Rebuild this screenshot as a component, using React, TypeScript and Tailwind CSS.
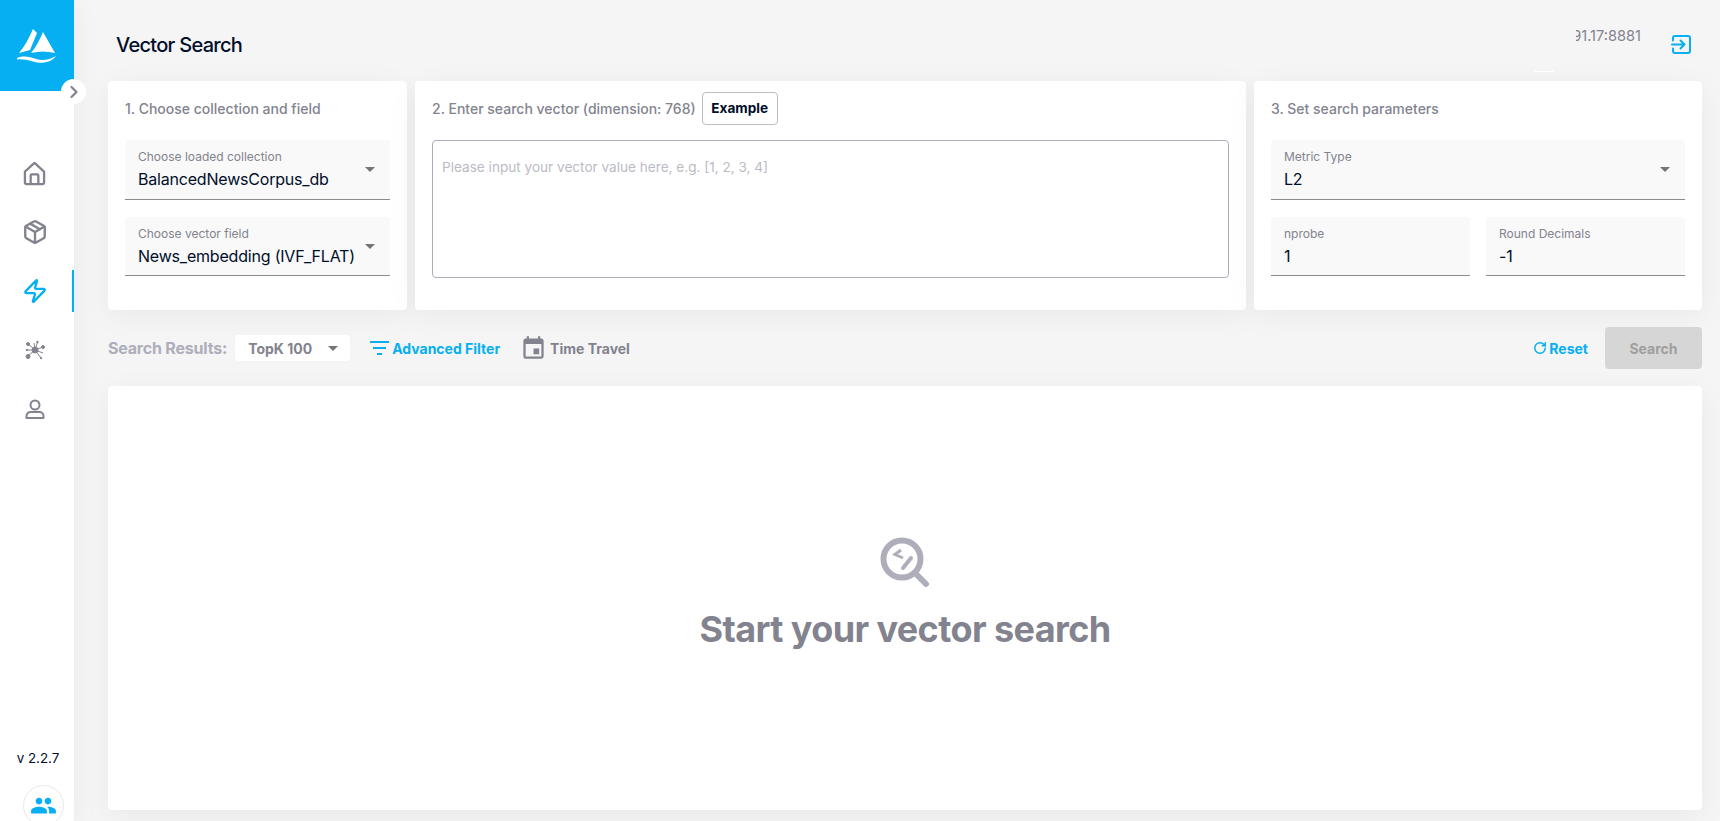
import { ChevronRight, Package, Zap, RotateCw } from "lucide-react";
import { MdPeople, MdEvent } from "react-icons/md";

function Logo() {
  return (
    <svg width="40" height="36" viewBox="0 0 40 36" fill="white">
      <path d="M16 1 L20 5 L13 22 L2 25 C8 18 12 10 16 1 Z" />
      <path d="M26 4 L38 25 C30 23 22 23 14 25 C19 19 23 11 26 4 Z" />
      <path d="M0 30 C7 27 13 29 19 31 C26 33 32 32 39 28 C34 35 24 36 16 33.5 C10 32 5 31 0 31.5 Z" />
    </svg>
  );
}

function HomeIcon() {
  return (
    <svg width="23" height="25" viewBox="0 0 24 26" fill="none" stroke="#82838e" strokeWidth="2.4" strokeLinejoin="round">
      <path d="M12 2 L2 11 V22 a2 2 0 0 0 2 2 H20 a2 2 0 0 0 2-2 V11 Z" />
      <path d="M8 24 V15 a1 1 0 0 1 1-1 H15 a1 1 0 0 1 1 1 V24" />
    </svg>
  );
}

function UserIcon() {
  return (
    <svg width="20" height="20" viewBox="0 0 20 20" fill="none" stroke="#82838e" strokeWidth="2" strokeLinejoin="round">
      <circle cx="10" cy="6" r="4.5" />
      <path d="M1.5 19 v-2 a4 4 0 0 1 4-4 h9 a4 4 0 0 1 4 4 v2 Z" />
    </svg>
  );
}

function NodesIcon() {
  return (
    <svg width="20" height="20" viewBox="0 0 20 20" fill="#82838e" stroke="#82838e" strokeWidth="1">
      <circle cx="10" cy="10" r="3" />
      <path d="M10 10 L3 4 M10 10 L12.5 2 M10 10 L18 7 M10 10 L16 18 M10 10 L3 16 M10 10 L2 10 M10 10 L9 3 M10 10 L18 13" fill="none" />
      <circle cx="3" cy="4" r="1.5" />
      <circle cx="18" cy="7" r="1.5" />
      <circle cx="3" cy="16.5" r="2" />
      <circle cx="12.5" cy="2" r="0.8" />
      <circle cx="16" cy="18" r="0.8" />
      <circle cx="2" cy="10" r="0.8" />
    </svg>
  );
}

function ExitIcon() {
  return (
    <svg width="20" height="19" viewBox="0 0 20 19" fill="none" stroke="#06aff2" strokeWidth="2" strokeLinecap="round" strokeLinejoin="round">
      <path d="M2 5.5 V3 a2 2 0 0 1 2-2 H17 a2 2 0 0 1 2 2 V16 a2 2 0 0 1-2 2 H4 a2 2 0 0 1-2-2 V13.5" />
      <path d="M1 9.5 H13 M9.5 5.5 L13.5 9.5 L9.5 13.5" />
    </svg>
  );
}

function SearchEmptyIcon() {
  return (
    <svg width="50" height="52" viewBox="0 0 50 52" fill="none" stroke="#aeaebb" strokeLinecap="round">
      <circle cx="22" cy="22" r="18.5" strokeWidth="6" />
      <path d="M35 36 L46 47" strokeWidth="6" />
      <path d="M23 31 L31 21" strokeWidth="4" />
      <path d="M21 13 L15 17.5 L23 21" strokeWidth="3" strokeLinecap="butt" />
    </svg>
  );
}

function FilterIcon() {
  return (
    <svg width="19" height="14" viewBox="0 0 19 14" fill="#06aff2">
      <rect x="0" y="0" width="19" height="2" />
      <rect x="3" y="6" width="13" height="2" />
      <rect x="7" y="12" width="5" height="2" />
    </svg>
  );
}

function Caret({ className }: { className: string }) {
  return <span className={`w-0 h-0 border-x-[5px] border-x-transparent border-t-[5px] border-t-[#757575] ${className}`} />;
}

function NavItem({ icon, active }: { icon: React.ReactNode; active?: boolean }) {
  return (
    <div className={`h-[42px] mb-[17px] flex items-center justify-center pr-[3px] border-r-2 ${active ? "border-[#06aff2]" : "border-transparent"}`}>
      {icon}
    </div>
  );
}

function Field({ label, value, select, className }: { label: string; value: string; select?: boolean; className: string }) {
  return (
    <div className={`relative bg-[#f9f9f9] rounded-t border-b border-[#8b8b8b] pl-[13px] pt-[9px] ${className}`}>
      <div className="text-[12px] leading-[16px] text-[#82838e]">{label}</div>
      <div className="text-[16px] leading-[24px] tracking-[-0.2px] text-[#010e29] mt-[2px] whitespace-nowrap">{value}</div>
      {select && <Caret className="absolute right-[15px] top-[27px]" />}
    </div>
  );
}

function Card({ className, children }: { className: string; children: React.ReactNode }) {
  return <div className={`bg-white rounded h-[229px] shadow-[0_6px_30px_rgba(0,0,0,0.05)] ${className}`}>{children}</div>;
}

function Heading({ children }: { children: React.ReactNode }) {
  return <div className="text-[14px] leading-[20px] font-medium text-[#82838e] whitespace-nowrap">{children}</div>;
}

export default function App() {
  return (
    <div className="flex h-[821px] overflow-hidden bg-[#f5f5f5] font-['Inter',sans-serif]">
      <aside className="relative w-[74px] shrink-0 bg-white flex flex-col shadow-[0_6px_30px_rgba(0,0,0,0.05)]">
        <div className="h-[91px] bg-[#06aff2] flex items-center justify-center">
          <Logo />
        </div>
        <div className="absolute left-[61px] top-[79px] w-[25px] h-[25px] rounded-full bg-white flex items-center justify-center">
          <ChevronRight size={20} strokeWidth={2.6} color="#82838e" />
        </div>
        <nav className="mt-[61px]">
          <NavItem icon={<HomeIcon />} />
          <NavItem icon={<Package size={26} strokeWidth={2.2} color="#82838e" />} />
          <NavItem active icon={<Zap size={26} strokeWidth={2.1} color="#06aff2" />} />
          <NavItem icon={<NodesIcon />} />
          <NavItem icon={<UserIcon />} />
        </nav>
        <div className="mt-auto pl-[2px] text-center text-[13.4px] leading-[20px] text-[#010e29] mb-[17px]">v 2.2.7</div>
        <div className="ml-[23px] mb-[-5px] w-[41px] h-[41px] rounded-full bg-white border border-[#e9e9ed] flex items-center justify-center">
          <MdPeople size={27} color="#06aff2" />
        </div>
      </aside>

      <main className="flex-1 min-w-0 pl-[34px] pr-[18px] flex flex-col">
        <header className="relative h-[81px] shrink-0">
          <h1 className="pl-[8px] pt-[31px] text-[20px] leading-[28px] font-medium tracking-[-0.7px] text-[#010e29]">Vector Search</h1>
          <div className="absolute right-[61px] top-[26px] w-[65px] flex justify-end overflow-hidden whitespace-nowrap text-[14.6px] leading-[20px] text-[#82838e]">
            0.91.17:8881
          </div>
          <div className="absolute right-[11px] top-[35px]">
            <ExitIcon />
          </div>
          <div className="absolute right-[148px] top-[71px] w-[20px] h-[1px] bg-white" />
        </header>

        <section className="flex gap-2 shrink-0">
          <Card className="w-[299px] px-[17px]">
            <div className="pt-[18px]"><Heading>1. Choose collection and field</Heading></div>
            <div className="mt-[21px] flex flex-col gap-[17px]">
              <Field select className="h-[60px]" label="Choose loaded collection" value="BalancedNewsCorpus_db" />
              <Field select className="h-[59px]" label="Choose vector field" value="News_embedding (IVF_FLAT)" />
            </div>
          </Card>
          <Card className="flex-1 min-w-0 px-[17px]">
            <div className="flex items-center gap-[6px] pt-[11px] h-[59px] pb-[15px]">
              <Heading>2. Enter search vector (dimension: 768)</Heading>
              <button className="h-[33px] w-[76px] rounded border border-[#bcbcc4] bg-white text-[13.6px] font-bold text-[#010e29]">Example</button>
            </div>
            <div className="h-[138px] rounded border border-[#aeaebb] px-[9px] py-[16px] text-[13.6px] leading-[20px] text-[#bbbbc4]">
              Please input your vector value here, e.g. [1, 2, 3, 4]
            </div>
          </Card>
          <Card className="w-[448px] px-[17px]">
            <div className="pt-[18px]"><Heading>3. Set search parameters</Heading></div>
            <div className="mt-[21px] flex flex-col gap-[17px]">
              <Field select className="h-[60px]" label="Metric Type" value="L2" />
              <div className="flex gap-4">
                <Field className="flex-1 h-[59px]" label="nprobe" value="1" />
                <Field className="flex-1 h-[59px]" label="Round Decimals" value="-1" />
              </div>
            </div>
          </Card>
        </section>

        <section className="flex items-center h-[76px] shrink-0 text-[14px] font-bold">
          <span className="text-[16px] tracking-[-0.2px] text-[#aeaebb]">Search Results:</span>
          <div className="ml-[8px] w-[115px] h-[26px] bg-white rounded flex items-center pl-[13px] text-[#82838e]">
            TopK 100
            <Caret className="ml-[16px]" />
          </div>
          <div className="ml-5 flex items-center gap-[3px] text-[#06aff2]"><FilterIcon /> Advanced Filter</div>
          <div className="ml-5 flex items-center gap-[3px] text-[#82838e]"><MdEvent size={27} color="#82838e" /> Time Travel</div>
          <div className="ml-auto flex items-center gap-[2px] text-[#06aff2]"><RotateCw size={14} strokeWidth={2.6} /> Reset</div>
          <button className="ml-[17px] w-[97px] h-[42px] rounded bg-[#d6d6d6] text-[#9e9e9e] font-bold">Search</button>
        </section>

        <section className="h-[424px] shrink-0 bg-white rounded shadow-[0_6px_30px_rgba(0,0,0,0.05)] flex flex-col items-center pt-[151px]">
          <SearchEmptyIcon />
          <div className="mt-[18px] text-[36px] leading-[44px] font-bold tracking-[-0.6px] text-[#82838e]">Start your vector search</div>
        </section>
      </main>
    </div>
  );
}
